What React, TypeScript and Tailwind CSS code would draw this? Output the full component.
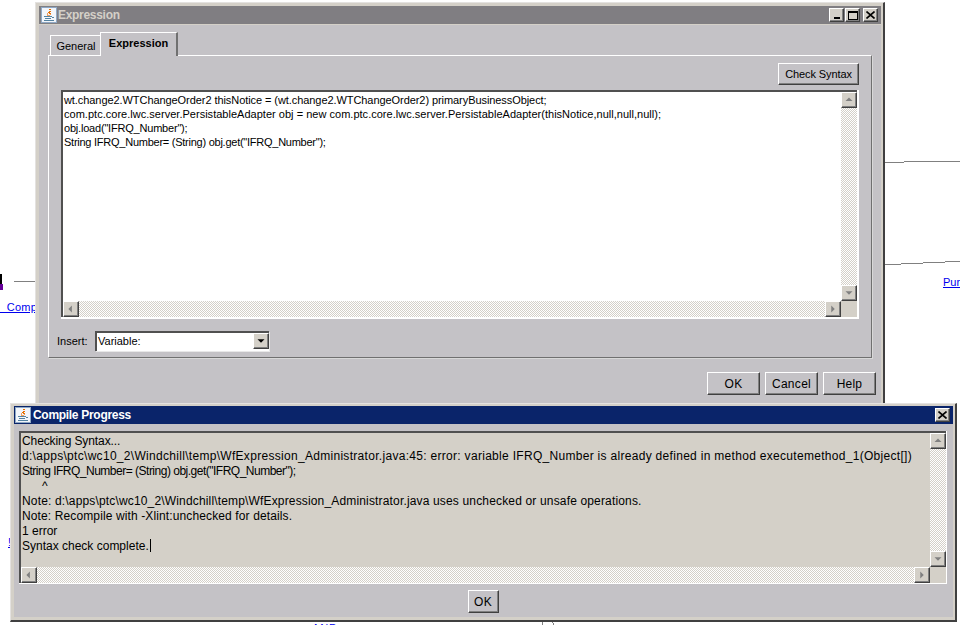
const FONT = "font-['Liberation_Sans',Arial,sans-serif]";
const RAISED =
  "border border-t-white border-l-white border-r-[#404040] border-b-[#404040] shadow-[inset_-1px_-1px_0_#808080]";
const TRACK =
  "bg-[repeating-conic-gradient(#ffffff_0_25%,#d4d0c8_0_50%)] bg-[length:2px_2px]";

// 行ごとの字間は元画面のビットマップフォントの幅に合わせた値
const EXPRESSION_LINES = [
  {
    text: "wt.change2.WTChangeOrder2 thisNotice = (wt.change2.WTChangeOrder2) primaryBusinessObject;",
    tracking: "tracking-[-0.07px]",
  },
  {
    text: "com.ptc.core.lwc.server.PersistableAdapter obj = new com.ptc.core.lwc.server.PersistableAdapter(thisNotice,null,null,null);",
    tracking: "tracking-[0.02px]",
  },
  { text: 'obj.load("IFRQ_Number");', tracking: "tracking-[-0.2px]" },
  { text: 'String IFRQ_Number= (String) obj.get("IFRQ_Number");', tracking: "tracking-[-0.25px]" },
];

const COMPILE_LINES = [
  { text: "Checking Syntax...", tracking: "tracking-[-0.1px]" },
  {
    text: "d:\\apps\\ptc\\wc10_2\\Windchill\\temp\\WfExpression_Administrator.java:45: error: variable IFRQ_Number is already defined in method executemethod_1(Object[])",
    tracking: "tracking-[0.3px]",
  },
  { text: 'String IFRQ_Number= (String) obj.get("IFRQ_Number");', tracking: "tracking-[-0.5px]" },
  { text: "      ^", tracking: "" },
  {
    text: "Note: d:\\apps\\ptc\\wc10_2\\Windchill\\temp\\WfExpression_Administrator.java uses unchecked or unsafe operations.",
    tracking: "tracking-[0.16px]",
  },
  { text: "Note: Recompile with -Xlint:unchecked for details.", tracking: "tracking-[0.12px]" },
  { text: "1 error", tracking: "" },
];

function JavaIcon() {
  return (
    <svg width="16" height="16" viewBox="0 0 16 16" className="shrink-0" shapeRendering="crispEdges">
      <rect x="0.5" y="0.5" width="15" height="15" fill="#f2f5fa" stroke="#8fa8c4" />
      <path d="M8 2h2v1H9v1h1v1H9v1h1v1H8V6H7V5h1V4h1V3H8z" fill="#e76f00" />
      <path d="M6 6h1v2h2V7h1v1H9v1H6z" fill="#f0a060" />
      <path d="M3 9h8v1H3zM11 10h2v1h-2zM4 11h6v1H4zM3 13h10v1H3z" fill="#5382a1" />
    </svg>
  );
}

type ArrowDirection = "up" | "down" | "left" | "right";

function Arrow({ dir, color = "#808080" }: { dir: ArrowDirection; color?: string }) {
  const points: Record<ArrowDirection, string> = {
    up: "4,9 8,5 12,9",
    down: "4,6 12,6 8,10",
    left: "9,4 9,12 5,8",
    right: "6,4 6,12 10,8",
  };
  return (
    <svg width="14" height="14" viewBox="0 0 16 16">
      <polygon points={points[dir]} fill={color} />
    </svg>
  );
}

function ScrollButton({ dir }: { dir: ArrowDirection }) {
  return (
    <div className={`flex h-4 w-4 shrink-0 items-center justify-center bg-[#d4d0c8] ${RAISED}`}>
      <Arrow dir={dir} />
    </div>
  );
}

function ScrollArea({ bg, children }: { bg: string; children: React.ReactNode }) {
  return (
    <div className={`grid h-full grid-cols-[1fr_16px] grid-rows-[1fr_16px] border-t-2 border-l-2 border-t-[#505050] border-l-[#505050] ${bg}`}>
      <div className="overflow-hidden">{children}</div>
      <div className={`flex flex-col justify-between ${TRACK}`}>
        <ScrollButton dir="up" />
        <ScrollButton dir="down" />
      </div>
      <div className={`flex justify-between ${TRACK}`}>
        <ScrollButton dir="left" />
        <ScrollButton dir="right" />
      </div>
      <div className="bg-[#d4d0c8]" />
    </div>
  );
}

function PushButton({ label, className }: { label: string; className: string }) {
  return (
    <button className={`flex items-center justify-center bg-[#c4c2c6] text-black ${RAISED} ${className}`}>
      {label}
    </button>
  );
}

function WindowButton({ children, className = "w-[15px]" }: { children: React.ReactNode; className?: string }) {
  return (
    <div className={`flex h-[14px] items-center justify-center bg-[#d4d0c8] ${RAISED} ${className}`}>
      {children}
    </div>
  );
}

function CloseGlyph() {
  return (
    <svg width="9" height="8" viewBox="0 0 9 8">
      <path d="M0.5 0.5L8.5 7.5M8.5 0.5L0.5 7.5" stroke="#000" strokeWidth="1.6" />
    </svg>
  );
}

function ExpressionWindow() {
  return (
    <div className="absolute top-[2px] left-[35px] flex h-[403px] w-[850px] flex-col border-t border-r-2 border-l border-t-[#e4e2e0] border-r-[#404040] border-l-[#e4e2e0] bg-[#d4d0c8] pt-[3px] pr-[2px] pl-[3px]">
      <div className="flex h-[18px] shrink-0 items-center bg-[#807e82] pr-[3px] pl-[2px]">
        <JavaIcon />
        <span className="ml-px text-[12px] font-bold tracking-[-0.3px] text-[#d4d0c8]">Expression</span>
        <div className="ml-auto flex">
          <WindowButton>
            <span className="mt-[6px] h-[2px] w-[6px] bg-black" />
          </WindowButton>
          <WindowButton className="ml-px w-[15px]">
            <span className="h-[9px] w-[10px] border border-t-2 border-black" />
          </WindowButton>
          <WindowButton className="ml-[3px] w-[15px]">
            <CloseGlyph />
          </WindowButton>
        </div>
      </div>

      <div className="mt-px flex min-h-0 flex-1 flex-col bg-[#c4c2c6]">
        <div className="flex h-[30px] shrink-0 items-end pl-[11px]">
          <div className="flex h-[20px] w-[50px] items-center justify-center border-t border-l border-t-white border-l-white pt-[2px] pl-px text-[11px] text-black">
            General
          </div>
          <div className="relative z-10 -mb-px flex h-[24px] w-[78px] items-center justify-center border-t border-r-2 border-l border-t-white border-r-[#707070] border-l-white bg-[#c4c2c6] pb-[3px] text-[11px] font-bold text-black">
            Expression
          </div>
        </div>

        <div className="mx-[9px] flex h-[303px] shrink-0 flex-col border border-t-white border-r-[#707070] border-b-[#707070] border-l-white shadow-[1px_1px_0_#d8d8d8]">
          <div className="mt-[7px] flex justify-end pr-[12px]">
            <PushButton label="Check Syntax" className="h-[22px] w-[81px] text-[11px] tracking-[-0.1px]" />
          </div>
          <div className="mx-[12px] mt-[5px] h-[229px] border-r-2 border-b-2 border-r-white border-b-white">
            <ScrollArea bg="bg-white">
              <div className="pt-px pl-px text-[11px] leading-[14px] whitespace-pre text-black">
                {EXPRESSION_LINES.map((line) => (
                  <div key={line.text} className={line.tracking}>
                    {line.text}
                  </div>
                ))}
              </div>
            </ScrollArea>
          </div>
          <div className="mt-[12px] flex items-center pl-[8px]">
            <span className="w-[38px] text-[11px] text-black">Insert:</span>
            <div className="flex h-[20px] w-[174px] border-t-2 border-l-2 border-t-[#505050] border-l-[#505050] bg-white shadow-[1px_1px_0_#e8e8e8]">
              <span className="flex-1 pl-px text-[11px] leading-[16px] text-black">Variable:</span>
              <div className={`flex h-[16px] w-[16px] items-center justify-center bg-[#d4d0c8] ${RAISED}`}>
                <Arrow dir="down" color="#000000" />
              </div>
            </div>
          </div>
        </div>

        <div className="mt-[14px] flex justify-end gap-[5px] pr-[5px]">
          <PushButton label="OK" className="h-[23px] w-[53px] text-[12px] tracking-[0.3px]" />
          <PushButton label="Cancel" className="h-[23px] w-[53px] text-[12px] tracking-[0.3px]" />
          <PushButton label="Help" className="h-[23px] w-[53px] text-[12px] tracking-[0.2px]" />
        </div>
      </div>
    </div>
  );
}

function CompileWindow() {
  return (
    <div className="absolute top-[403px] left-[10px] flex h-[219px] w-[947px] flex-col border-t border-r-2 border-b-2 border-l border-t-[#e4e2e0] border-r-[#404040] border-b-[#404040] border-l-[#e4e2e0] bg-[#d4d0c8] pt-[2px] pr-[2px] pb-[3px] pl-[3px]">
      <div className="flex h-[18px] shrink-0 items-center bg-[#0a246a] pr-[3px] pl-px">
        <JavaIcon />
        <span className="ml-[2px] text-[12px] font-bold tracking-[-0.3px] text-white">Compile Progress</span>
        <div className="ml-auto">
          <WindowButton>
            <CloseGlyph />
          </WindowButton>
        </div>
      </div>

      <div className="flex min-h-0 flex-1 flex-col bg-[#c4c2c6] pt-[7px] pr-[6px] pl-[5px]">
        <div className="h-[153px] shrink-0 border-r border-b border-r-white border-b-white">
          <ScrollArea bg="bg-[#d4d0c8]">
            <div className="pt-px pl-px text-[12px] leading-[15px] whitespace-pre text-black">
              {COMPILE_LINES.map((line) => (
                <div key={line.text} className={line.tracking}>
                  {line.text}
                </div>
              ))}
              <div>
                Syntax check complete.
                <span className="ml-px inline-block h-[13px] w-px bg-black align-[-2px]" />
              </div>
            </div>
          </ScrollArea>
        </div>
        <div className="mt-[6px] flex justify-center">
          <PushButton label="OK" className="h-[23px] w-[31px] text-[12px] tracking-[0.3px]" />
        </div>
      </div>
    </div>
  );
}

// 背後のワークフロー図。ウィンドウの隙間に見えている部分だけ置く
function DiagramBackdrop() {
  return (
    <>
      <svg width="960" height="625" className="absolute inset-0" shapeRendering="crispEdges">
        <path d="M14 281.5H36" stroke="#808080" />
        <path d="M885 162.5H904M904 161.5H960" stroke="#808080" />
        <path d="M885 264.5H901M901 263.5H923M923 262.5H945M945 261.5H960" stroke="#808080" />
        <rect x="0" y="274" width="2" height="12" fill="#000" />
        <rect x="0" y="284" width="3" height="6" fill="#660099" />
        <path d="M542.5 621V625M552 621L554 625" stroke="#808080" />
      </svg>
      <span className="absolute top-[299px] left-0 text-[11px] tracking-[0.3px] whitespace-pre text-[#0000ee] underline">
        {"\u00a0 Compl"}
      </span>
      <span className="absolute top-[274px] left-[943px] text-[11px] text-[#0000ee] underline">Pur</span>
      <span className="absolute top-[534px] left-[8px] text-[11px] text-[#0000ee] underline">!</span>
      <span className="absolute top-[620px] left-[312px] text-[11px] tracking-[0.8px] text-[#0000ee]">
        AND
      </span>
    </>
  );
}

export default function App() {
  return (
    <div className={`relative h-[625px] w-[960px] overflow-hidden bg-white ${FONT}`}>
      <DiagramBackdrop />
      <ExpressionWindow />
      <CompileWindow />
    </div>
  );
}
